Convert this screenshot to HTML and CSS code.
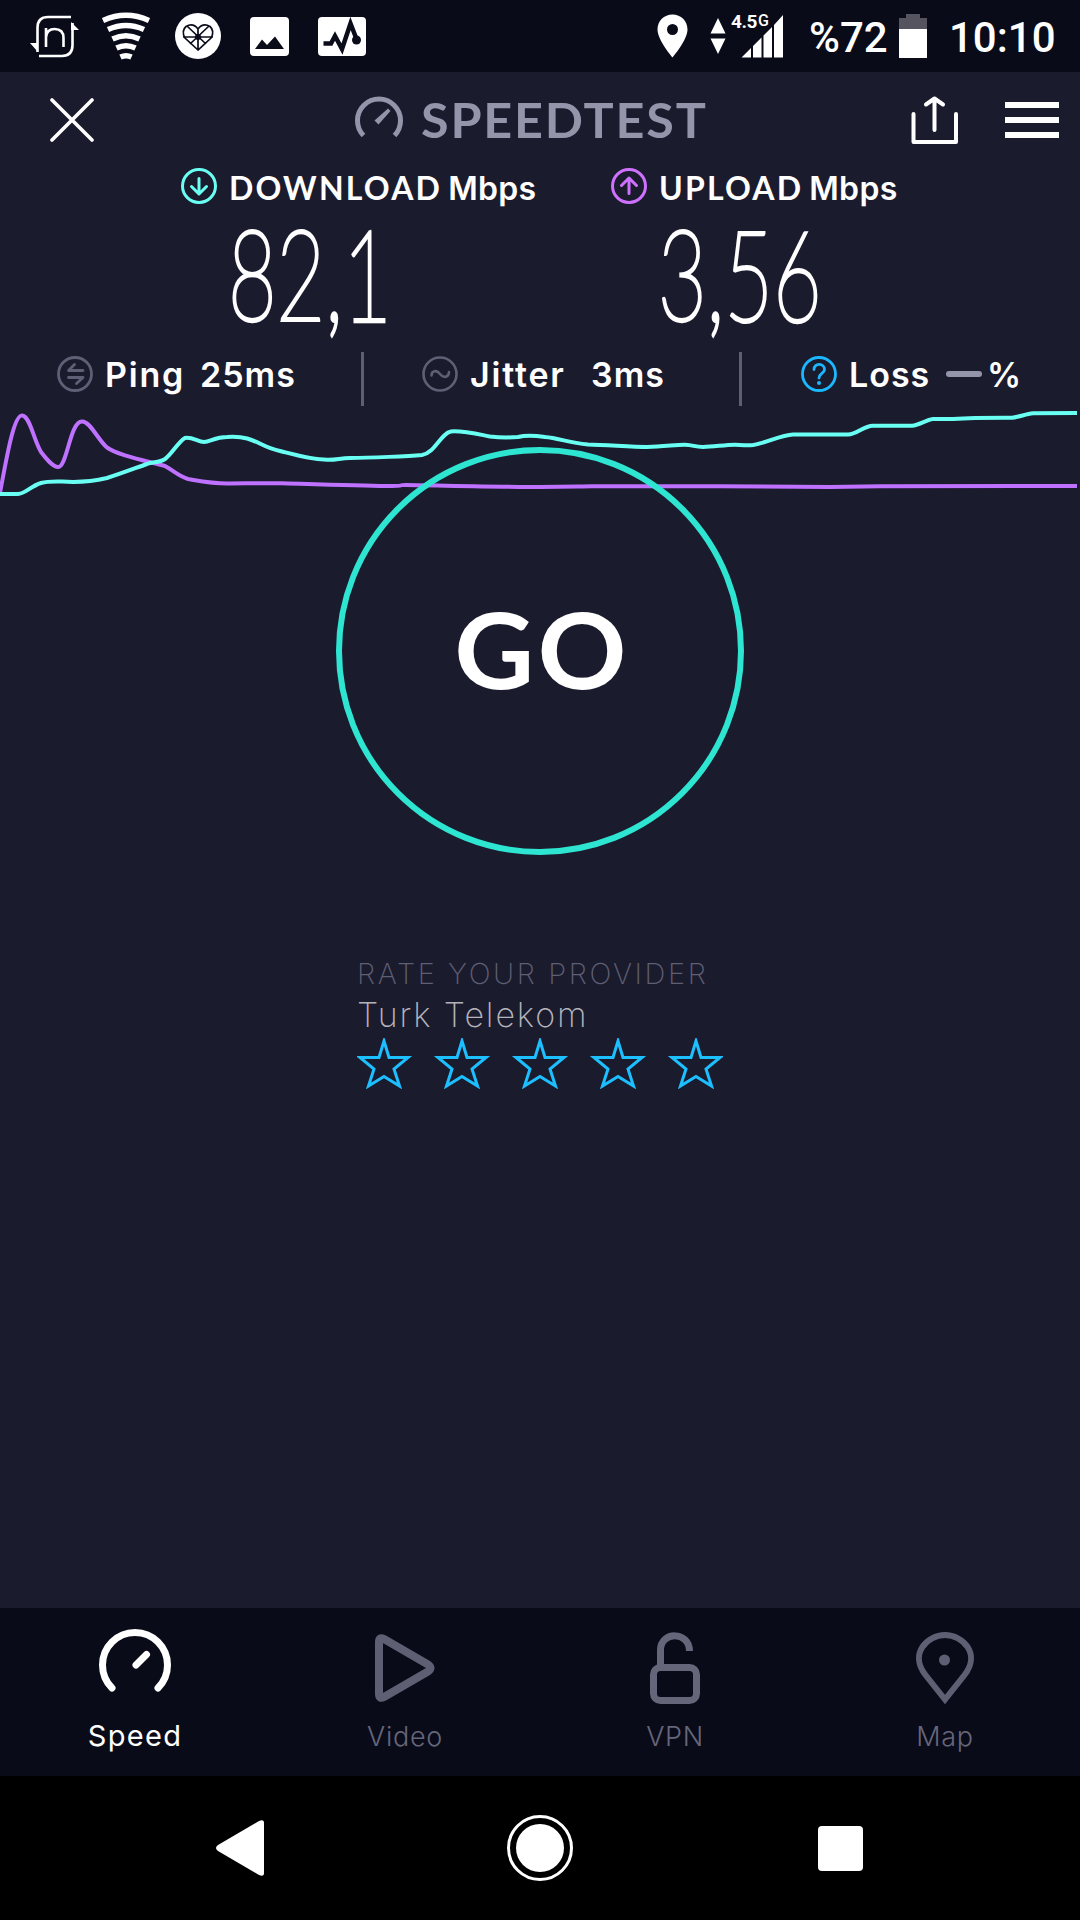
FILE: index.html
```html
<!DOCTYPE html>
<html lang="en">
<head>
    <meta charset="UTF-8">
    <meta name="viewport" content="width=device-width, initial-scale=1.0">
    <title>Speedtest</title>
    <link rel="stylesheet" href="styles.css">
</head>
<body>
    <div class="status-bar">
        <div class="notifications">
            <svg width="50" height="46" viewBox="0 0 50 46">
                <g fill="none" stroke="#fff" stroke-width="2.6">
                    <path d="M7.5 39V15Q7.5 4 18 4H41M42.500 10V32Q42.500 43 32 43H9"/>
                    <path d="M16 15V34M16 24Q17 16 24.500 16Q33.500 16 33.500 25V34"/>
                </g>
                <path d="M0 30H8V39ZM41 9L49 17H41Z" fill="#fff"/>
            </svg>
            <svg class="wifi" width="48" height="48" viewBox="0 0 48 48" fill="none" stroke="#fff" stroke-width="5.500">
                <path d="M1 8.500Q24 -2 47 8.500M6 17.500Q24 9.500 42 17.500M10.500 27Q24 20.500 37.500 27M14.500 36Q24 31.500 33.500 36M18.500 45Q24 42.500 29.500 45"/>
            </svg>
            <svg class="heart" width="46" height="46" viewBox="0 0 46 46">
                <circle cx="23" cy="23" r="23" fill="#fff"/>
                <path d="M23 37L10 25Q6 18 11 13.500Q18 9.500 23 16Q28 9.500 35 13.500Q40 18 36 25ZM23 15V37M8 24H38M12 13L31 31M34 13L15 31" fill="none" stroke="#0a0c1a" stroke-width="1.700"/>
                <circle cx="23" cy="24" r="3" fill="#0a0c1a"/>
            </svg>
            <svg class="photo" width="39" height="39" viewBox="0 0 39 39">
                <rect width="39" height="39" rx="4" fill="#fff"/>
                <path d="M5 32L12 22.500L17 28L25 19.500L34 32Z" fill="#0a0c1a"/>
            </svg>
            <svg class="pulse" width="48" height="39" viewBox="0 0 48 39">
                <rect width="48" height="39" rx="4" fill="#fff"/>
                <path d="M5.500 26.500H13L17 19L24 32L32.500 6.500L38.500 22" fill="none" stroke="#0a0c1a" stroke-width="4.500"/>
                <circle cx="38.500" cy="23" r="4.500" fill="#0a0c1a"/>
            </svg>
        </div>
        <div class="system">
            <svg width="31" height="44" viewBox="0 0 31 44">
                <path d="M15.500 0.500C7 .5 0.500 7 0.500 15.500C0.500 26 15.500 43.500 15.500 43.500S30.500 26 30.500 15.500C30.500 7 24 .5 15.500 .5ZM15.500 10A5.500 5.500 0 1 1 15.500 21A5.500 5.500 0 1 1 15.500 10Z" fill="#fff" fill-rule="evenodd"/>
            </svg>
            <svg class="signal" width="74" height="52" viewBox="0 -3 74 52" fill="#fff">
                <path d="M0.500 20.500L8 5L15.500 20.500ZM0.500 25.500H15.500L8 41Z"/>
                <text x="21" y="15" class="network">4.5<tspan class="network-g" x="48" y="12.500">G</tspan></text>
                <path d="M31.500 44.500L41 35V44.500ZM43 33L51.500 24.500V44.500H43ZM53.500 22.500L62 14V44.500H53.500ZM64 12L73 2V44.500H64Z"/>
            </svg>
            <span class="battery-level">%72</span>
            <svg class="battery" width="28" height="44" viewBox="0 0 28 44">
                <path d="M7 0H21V4H28V15H0V4H7Z" fill="#55545f"/>
                <rect y="15" width="28" height="29" fill="#fff"/>
            </svg>
            <span class="clock">10:10</span>
        </div>
    </div>

    <div class="header">
        <svg class="close" width="44" height="44" viewBox="0 0 44 44">
            <path d="M2 2L42 42M42 2L2 42" stroke="#fff" stroke-width="3.600" stroke-linecap="round"/>
        </svg>
        <div class="logo">
            <svg width="48" height="48" viewBox="0 0 48 48">
                <path d="M8.500 39.500A21.500 21.500 0 1 1 39.500 39.500" fill="none" stroke="#9494aa" stroke-width="5"/>
                <path d="M19.500 24.500L33 12.500L35.500 15L23.500 28.500Z" fill="#9494aa"/>
            </svg>
            <span class="logo-text">SPEEDTEST</span>
        </div>
        <div class="actions">
            <svg width="48" height="48" viewBox="0 0 48 48" fill="none" stroke="#fff" stroke-width="4" stroke-linecap="round" stroke-linejoin="round">
                <path d="M2.500 18V46H45V18M23.500 34V2.500M15 8.500L23.500 2.500L32 8.500"/>
            </svg>
            <div class="menu">
                <i></i>
                <i></i>
                <i></i>
            </div>
        </div>
    </div>

    <div class="results">
        <div class="result">
            <div class="result-label">
                <svg width="36" height="36" viewBox="0 0 36 36" fill="none" stroke="#6afff3" stroke-width="3" stroke-linecap="round" stroke-linejoin="round">
                    <circle cx="18" cy="18" r="16.500"/>
                    <path d="M18 10.500V26M10.500 18.500L18 26L25.500 18.500"/>
                </svg>
                <span class="caps">DOWNLOAD</span>
                <span class="unit">Mbps</span>
            </div>
            <div class="number">82,1</div>
        </div>
        <div class="result">
            <div class="result-label">
                <svg width="36" height="36" viewBox="0 0 36 36" fill="none" stroke="#cf71ff" stroke-width="3" stroke-linecap="round" stroke-linejoin="round">
                    <circle cx="18" cy="18" r="16.500"/>
                    <path d="M18 25.500V10M10.500 17.500L18 10L25.500 17.500"/>
                </svg>
                <span class="caps">UPLOAD</span>
                <span class="unit">Mbps</span>
            </div>
            <div class="number">3,56</div>
        </div>
    </div>

    <div class="stats">
        <div class="stat ping">
            <svg width="36" height="36" viewBox="0 0 36 36" fill="none" stroke="#5f5f75" stroke-width="2.800" stroke-linecap="round" stroke-linejoin="round">
                <circle cx="18" cy="18" r="16.500"/>
                <path d="M26 14.500H11.500L17.500 8.500M11.500 21.500H26L19.500 27.500"/>
            </svg>
            <span class="stat-name">Ping</span>
            <span>25ms</span>
        </div>
        <div class="stat jitter">
            <svg width="36" height="36" viewBox="0 0 36 36" fill="none" stroke="#5f5f75" stroke-width="2.600" stroke-linecap="round">
                <circle cx="18" cy="18" r="16.500"/>
                <path d="M9.500 19.500C9.500 14.500 14.500 13.500 18 18S27 21.500 27 16"/>
            </svg>
            <span class="stat-name">Jitter</span>
            <span>3ms</span>
        </div>
        <div class="stat loss">
            <svg width="36" height="36" viewBox="0 0 36 36" fill="none" stroke="#19b8ff" stroke-width="2.800" stroke-linecap="round">
                <circle cx="18" cy="18" r="16.500"/>
                <path d="M13 13.500C13 6.500 23.500 7 23.500 13.500C23.500 17.500 18 17.500 18 22"/>
                <circle cx="18" cy="27" r="2" fill="#19b8ff" stroke="none"/>
            </svg>
            <span class="stat-name">Loss</span>
            <i class="dash"></i>
            <span class="percent">%</span>
        </div>
    </div>

    <svg class="chart" width="1080" height="90" viewBox="0 0 1080 90" fill="none" stroke-width="4">
        <path stroke="#bf71ff" d="M0 83C7 45 14 5 22 5.500S33 28 41 42C48 51 53 57 58 57C67 58 70 11 82 11.500C90 11 98 30 107 37.500C118 45 138 49 165 56C171 59 180 67 188 69C200 71 213 73.500 227 73.500S270 73 282 73.300S360 76 385 76S395 75 406 75S510 77 540 77S580 76.300 592 76.300L720 76.300L830 77L880 76.300L1077 76"/>
        <path stroke="#6afff3" d="M0 84H18C25 84 31 76 41 73C48 71 56 71.500 62 71.500C76 72.500 90 72 107 68C120 64 133 59 147 54C153 51.500 159 53 165 49C172 44 178 32 185 28C192 26.500 198 32 204 32S215 27 227 27C255 25 259 37 280 41C300 46 312 49.500 327 49.700C337 50 340 48 350 48C370 48 410 46 422 45C435 43 441 23 451 21.500C462 20.500 477 24 490 26.500C499 27.500 511 27.500 518 27C526 25 538 26 545 27C559 28 568 33 588 34.500C608 35 632 37 647 37C663 37 676 34.500 685 34.700C694 35 694 37 703 37C714 37 724 34.700 735 34.700S745 36 753 35C766 33 781 25 793 24.500H848C857 24.500 863 16 873 15.700H912C919 15 926 10 933 9H953C975 7.500 992 7.700 1012 7.700C1019 7 1026 4 1033 3.300L1077 3"/>
    </svg>

    <button class="go"><span>GO</span></button>

    <div class="rate">
        <div class="rate-title">RATE YOUR PROVIDER</div>
        <div class="provider">Turk Telekom</div>
        <svg class="stars" width="366" height="51" viewBox="0 0 366 51" fill="none" stroke="#1cbfff" stroke-width="3">
            <defs>
                <path id="star" d="M27 3L32 19.500H51L37 31L42.500 48L27 38.500L11.500 48L17 31L3 19.500H22Z"/>
            </defs>
            <use href="#star"/>
            <use href="#star" x="78"/>
            <use href="#star" x="156"/>
            <use href="#star" x="234"/>
            <use href="#star" x="312"/>
        </svg>
    </div>

    <div class="tabs">
        <div class="tab active">
            <svg width="80" height="80" viewBox="0 0 80 80" fill="none" stroke="#fff" stroke-width="7" stroke-linecap="round">
                <path d="M17 60A32.500 32.500 0 1 1 63 60M41 37L51.500 26.500"/>
            </svg>
            <span>Speed</span>
        </div>
        <div class="tab">
            <svg width="80" height="80" viewBox="0 0 80 80" fill="none" stroke="#5f5f73" stroke-width="8" stroke-linejoin="round">
                <path d="M14 14Q14 8.500 19 11L63 36.500Q68 40 63 43.500L19 69Q14 71.500 14 66Z"/>
            </svg>
            <span>Video</span>
        </div>
        <div class="tab">
            <svg width="80" height="80" viewBox="0 0 80 80" fill="none" stroke="#66667a" stroke-width="7">
                <rect x="18.500" y="39.500" width="43" height="33" rx="7"/>
                <path d="M25.500 38V22C25.500 3 54.500 3 54.500 23"/>
            </svg>
            <span>VPN</span>
        </div>
        <div class="tab">
            <svg width="80" height="80" viewBox="0 0 80 80">
                <path d="M40 71.500L20.500 47C4 26 22 7 40 7S76 26 59.500 47Z" fill="none" stroke="#5f5f73" stroke-width="6"/>
                <circle cx="39.500" cy="32" r="5.500" fill="#5f5f73"/>
            </svg>
            <span>Map</span>
        </div>
    </div>

    <div class="nav-bar">
        <svg width="50" height="58" viewBox="0 0 50 58">
            <path d="M3 26L44 2Q49 0 49 4V54Q49 58 44 56L3 32Q-1 29 3 26Z" fill="#fff"/>
        </svg>
        <svg class="home" width="66" height="66" viewBox="0 0 66 66">
            <circle cx="33" cy="33" r="31.500" fill="none" stroke="#fff" stroke-width="3"/>
            <circle cx="33" cy="33" r="24" fill="#fff"/>
        </svg>
        <div class="recent"></div>
    </div>
</body>
</html>
```

FILE: styles.css
```css
* {
    box-sizing: border-box;
}
body {
    margin: 0;
    width: 1080px;
    height: 1920px;
    display: flex;
    flex-direction: column;
    background-color: #1b1b2e;
    color: white;
    font-family: Inter, sans-serif;
    overflow: hidden;
}
svg {
    display: block;
    flex-shrink: 0;
}

/* Status bar */
.status-bar {
    height: 72px;
    display: flex;
    justify-content: space-between;
    align-items: center;
    padding: 0 25px 0 30px;
    background-color: #090b19;
    font-family: Roboto, sans-serif;
    font-size: 42px;
    font-weight: 500;
}
.notifications, .system {
    display: flex;
    align-items: center;
}
.wifi {
    margin-left: 22px;
}
.heart {
    margin-left: 25px;
}
.photo {
    margin-left: 29px;
}
.pulse {
    margin-left: 29px;
}
.signal {
    margin-left: 22px;
}
.network {
    font-size: 19px;
    font-weight: 700;
    letter-spacing: -0.4px;
}
.network-g {
    font-size: 16px;
    font-weight: 500;
}
.battery-level {
    width: 90px;
    margin-left: 25px;
    line-height: 72px;
    padding-top: 3px;
}
.battery {
    margin-right: 22px;
}
.clock {
    width: 106px;
    line-height: 72px;
    padding-top: 3px;
}

/* Header */
.header {
    height: 96px;
    display: flex;
    align-items: center;
    justify-content: space-between;
    padding: 0 21px 0 50px;
}
.logo {
    display: flex;
    align-items: center;
    margin-left: 60px;
}
.logo-text {
    margin-left: 18px;
    width: 290px;
    color: #9494aa;
    font-family: Lato, sans-serif;
    font-size: 47px;
    font-weight: 700;
    letter-spacing: 1.7px;
    transform: scaleX(1.07);
    transform-origin: left;
}
.actions {
    display: flex;
    align-items: center;
    gap: 46px;
}
.menu {
    width: 54px;
    display: flex;
    flex-direction: column;
    gap: 9px;
}
.menu i {
    height: 6px;
    background-color: white;
}

/* Results */
.results {
    height: 170px;
    display: flex;
    padding-left: 181px;
}
.result {
    width: 430px;
}
.result-label {
    height: 36px;
    display: flex;
    align-items: baseline;
    font-size: 32px;
    font-weight: 600;
    line-height: 40px;
}
.result-label svg {
    align-self: center;
}
.caps {
    margin-left: 12px;
    font-family: Lato, sans-serif;
    font-weight: 700;
    letter-spacing: 2.2px;
}
.unit {
    margin-left: 6px;
    letter-spacing: 0.3px;
}
.number {
    width: 260px;
    margin: 8px 0 0 47px;
    font-family: Lato, sans-serif;
    font-size: 127px;
    font-weight: 100;
    line-height: 120px;
    transform: scaleX(0.66);
    transform-origin: left;
    -webkit-text-stroke: 4px white;
}

/* Ping / jitter / loss */
.stats {
    height: 72px;
    display: flex;
    align-items: center;
    font-size: 34px;
    font-weight: 600;
    letter-spacing: 1px;
}
.stat {
    height: 72px;
    display: flex;
    align-items: center;
}
.stat-name {
    margin-left: 12px;
}
.ping {
    width: 361px;
    padding-left: 57px;
}
.ping .stat-name {
    width: 95px;
    letter-spacing: 1.8px;
}
.jitter {
    width: 381px;
    padding-left: 58px;
    border-left: 3px solid #5f5f73;
    border-right: 3px solid #5f5f73;
    height: 54px;
    margin-top: 10px;
    padding-bottom: 10px;
}
.jitter .stat-name {
    width: 121px;
    letter-spacing: 1.8px;
}
.loss {
    padding-left: 59px;
}
.loss .stat-name {
    width: 97px;
}
.dash {
    width: 36px;
    height: 6px;
    border-radius: 3px;
    background-color: #9494aa;
}
.percent {
    margin-left: 5px;
}

/* Chart and go button */
.chart {
    height: 90px;
}
.go {
    width: 408px;
    height: 408px;
    flex-shrink: 0;
    align-self: center;
    margin-top: -53px;
    padding: 0 0 6px 4px;
    border: 6px solid #2de5d1;
    border-radius: 50%;
    background: none;
    color: white;
    font-family: Lato, sans-serif;
    font-size: 105px;
    font-weight: 700;
}
.go span {
    display: block;
    letter-spacing: 3px;
    transform: scaleX(1.05);
}

/* Provider rating */
.rate {
    flex: 1;
    margin: 98px 0 0 357px;
}
.rate-title {
    color: #5f5f73;
    font-size: 29px;
    font-weight: 200;
    letter-spacing: 2.6px;
    line-height: 42px;
}
.provider {
    color: #b5b3ba;
    font-size: 34px;
    font-weight: 200;
    letter-spacing: 1.9px;
    line-height: 39px;
}
.stars {
    margin-top: 4px;
}

/* Tabs */
.tabs {
    height: 168px;
    display: flex;
    background-color: #090b19;
}
.tab {
    width: 270px;
    display: flex;
    flex-direction: column;
    align-items: center;
    padding-top: 20px;
    color: #66667a;
    font-size: 27px;
    font-weight: 300;
    letter-spacing: 0.7px;
}
.tab span {
    margin-top: 9px;
    line-height: 40px;
}
.tab.active {
    color: white;
    font-size: 29px;
    font-weight: 400;
    letter-spacing: 1.3px;
}
.tab.active span {
    margin-top: 8px;
}

/* Navigation bar */
.nav-bar {
    height: 144px;
    display: flex;
    align-items: center;
    justify-content: space-between;
    padding: 0 217px 0 215px;
    background-color: black;
}
.home {
    margin-right: 3px;
}
.recent {
    width: 45px;
    height: 45px;
    border-radius: 4px;
    background-color: white;
}
```
